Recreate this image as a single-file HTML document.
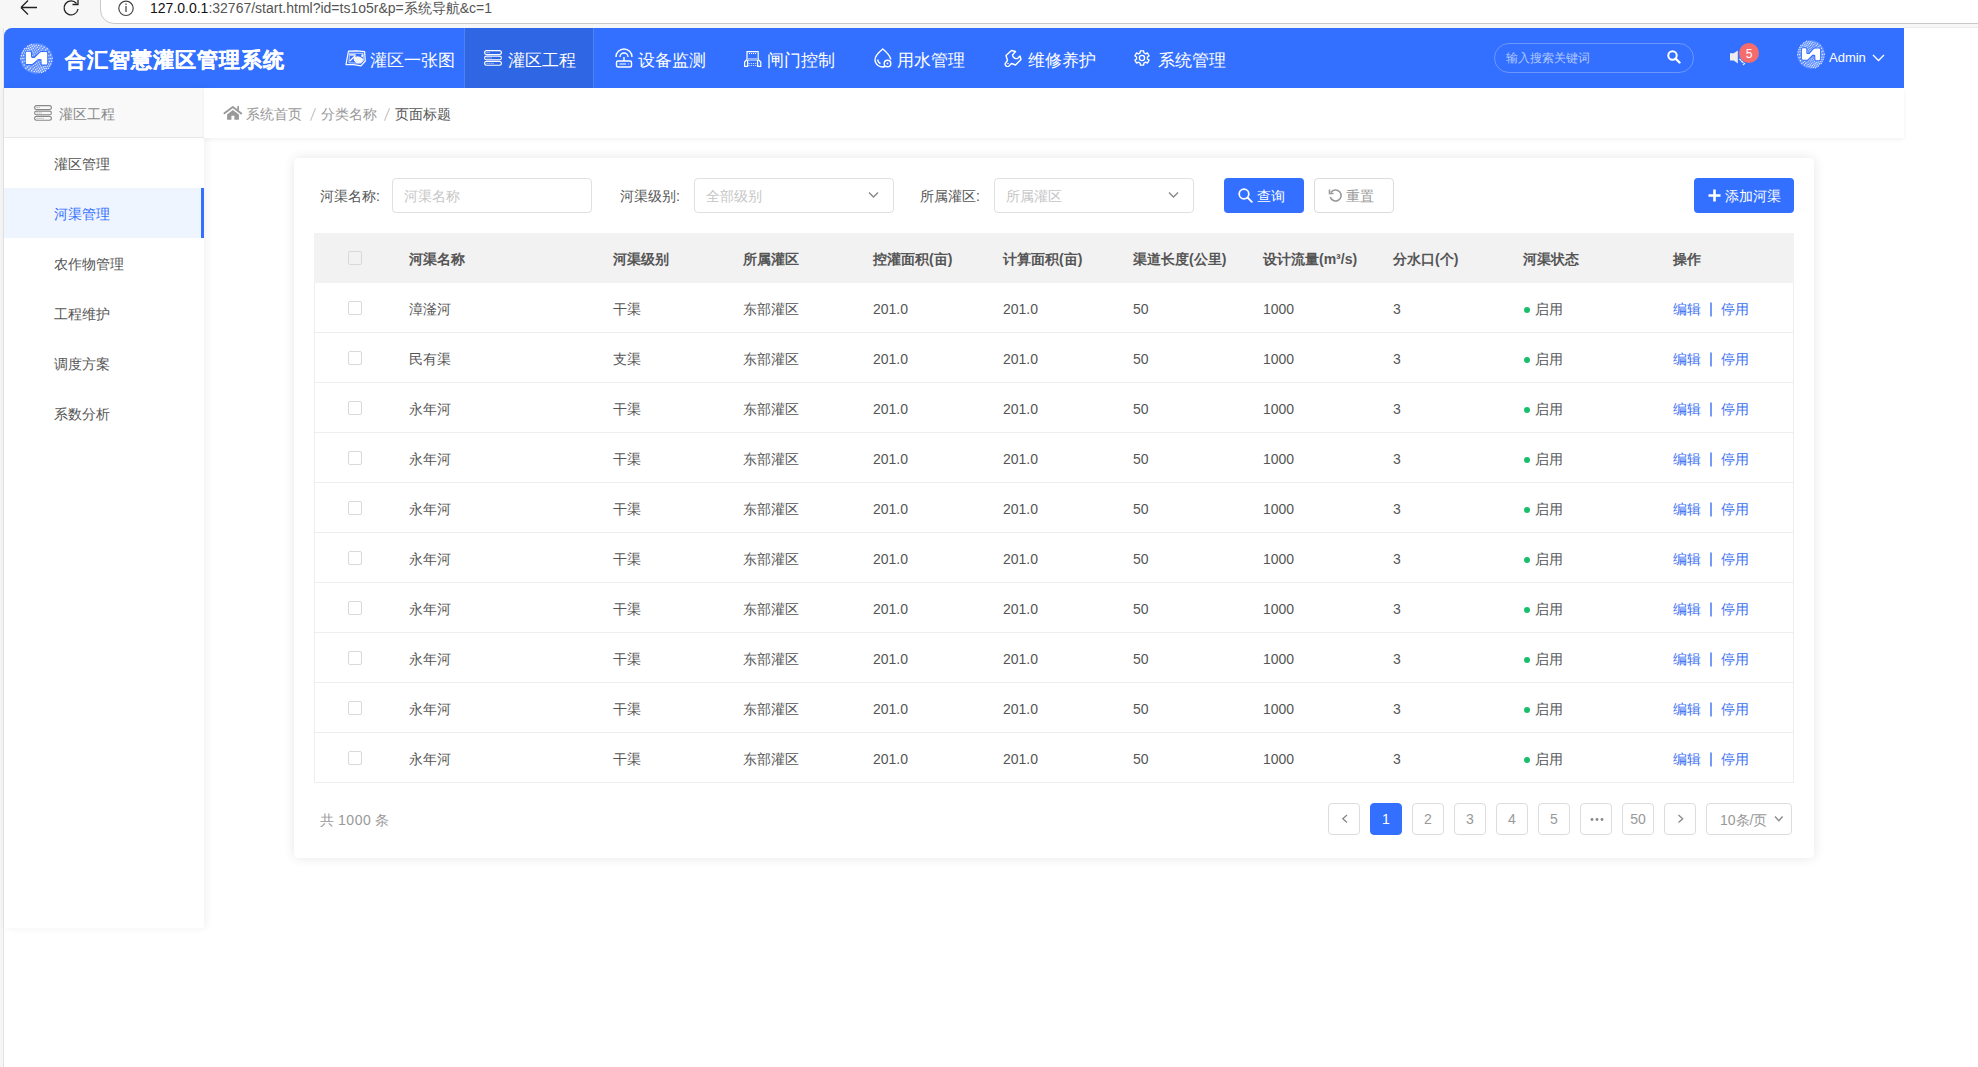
<!DOCTYPE html>
<html><head><meta charset="utf-8">
<style>
*{margin:0;padding:0;box-sizing:border-box}
html,body{width:1978px;height:1067px;overflow:hidden;background:#fff;font-family:"Liberation Sans",sans-serif;}
.a{position:absolute}
.t{position:absolute;white-space:nowrap}
#chrome{left:0;top:0;width:1978px;height:28px;background:#f7f7f7}
#addr{left:100px;top:-14px;width:1900px;height:38px;background:#fff;border:1px solid #c9c9c9;border-radius:14px}
#hdr{left:4px;top:28px;width:1900px;height:60px;background:#3370ff;border-top-left-radius:8px}
.nav{color:#fff;font-size:16.5px;line-height:20px;top:50px}
.navact{left:464px;top:28px;width:130px;height:60px;background:#2f66e3;border-left:1px solid #4f82f0;border-right:1px solid #4f82f0}
#side{left:4px;top:88px;width:200px;height:840px;background:#fff;box-shadow:2px 0 8px rgba(0,0,0,0.06)}
#sidehd{left:4px;top:88px;width:200px;height:50px;background:#f9f9f9;border-bottom:1px solid #e8e8e8}
.si{font-size:14px;line-height:20px;color:#555;left:54px}
#crumb{left:204px;top:88px;width:1700px;height:50px;background:#fff;box-shadow:0 2px 4px rgba(0,0,0,0.05)}
#card{left:294px;top:158px;width:1520px;height:700px;background:#fff;border-radius:4px;box-shadow:0 0 12px rgba(0,0,0,0.1)}
.lbl{font-size:14px;line-height:20px;color:#555;top:186px}
.inp{top:178px;height:35px;width:200px;border:1px solid #e0e0e0;border-radius:4px;background:#fff}
.ph{font-size:14px;line-height:20px;color:#c6c6c6;top:186px}
.btn{top:178px;height:35px;border-radius:4px}
.th{font-size:14px;line-height:20px;color:#555;font-weight:bold;top:249px}
.cb{width:14px;height:14px;border:1px solid #d9d9d9;border-radius:2px;background:transparent;left:348px}
.td{font-size:14px;line-height:20px;color:#555}
.lnk{color:#3a6ff5}
.pg{top:803px;width:32px;height:32px;border:1px solid #ddd;border-radius:4px;background:#fff;color:#999;font-size:14px;line-height:30px;text-align:center}
</style></head><body>
<div id="chrome" class="a"></div>
<div id="addr" class="a"></div>
<div class="a" style="left:1904px;top:27px;width:74px;height:1px;background:#ececec"></div>
<!-- browser icons -->
<svg class="a" style="left:18px;top:0px" width="22" height="16" viewBox="0 0 22 16"><path d="M3 7.5H19M3 7.5L10 0.5M3 7.5L10 14.5" stroke="#222" stroke-width="1.3" fill="none"/></svg>
<svg class="a" style="left:62px;top:0px" width="20" height="17" viewBox="0 0 20 17"><path d="M14.5 3.5A7 7 0 1 0 16 9" stroke="#222" stroke-width="1.3" fill="none"/><path d="M10.5 4.5H16V-1" stroke="#222" stroke-width="1.3" fill="none"/></svg>
<svg class="a" style="left:117px;top:0px" width="18" height="17" viewBox="0 0 18 17"><circle cx="9" cy="8.3" r="7.2" stroke="#444" stroke-width="1.2" fill="none"/><rect x="8.3" y="6" width="1.4" height="6" fill="#555"/><rect x="8.3" y="3.5" width="1.4" height="1.4" fill="#555"/></svg>
<div class="t" style="left:150px;top:0px;font-size:14px;line-height:16px;color:#555"><span style="color:#111">127.0.0.1</span>:32767/start.html?id=ts1o5r&amp;p=系统导航&amp;c=1</div>
<div class="a" style="left:0;top:28px;width:3px;height:1039px;background:#f5f5f5"></div>
<div class="a" style="left:3px;top:28px;width:1px;height:1039px;background:#e3e3e3"></div>

<!-- header -->
<div id="hdr" class="a"></div>
<div class="a navact"></div>
<svg width="0" height="0" style="position:absolute"><defs><symbol id="logo" viewBox="0 0 33 31"><ellipse cx="16.5" cy="15.5" rx="16.3" ry="15.3" fill="#fff" opacity="0.22"/><g fill="#fff" opacity="0.85"><circle cx="7.7" cy="3.3" r="0.75"/><circle cx="9.6" cy="2.5" r="0.75"/><circle cx="11.3" cy="1.4" r="0.75"/><circle cx="4.5" cy="5.8" r="0.75"/><circle cx="6.7" cy="5.6" r="0.75"/><circle cx="8.7" cy="5.2" r="0.75"/><circle cx="10.6" cy="4.4" r="0.75"/><circle cx="12.3" cy="3.3" r="0.75"/><circle cx="13.8" cy="1.9" r="0.75"/><circle cx="3.4" cy="7.9" r="0.75"/><circle cx="5.6" cy="7.9" r="0.75"/><circle cx="7.8" cy="7.6" r="0.75"/><circle cx="9.7" cy="7.0" r="0.75"/><circle cx="11.6" cy="6.2" r="0.75"/><circle cx="13.3" cy="5.2" r="0.75"/><circle cx="14.8" cy="3.8" r="0.75"/><circle cx="16.2" cy="2.2" r="0.75"/><circle cx="2.3" cy="10.1" r="0.75"/><circle cx="4.6" cy="10.1" r="0.75"/><circle cx="6.8" cy="9.9" r="0.75"/><circle cx="8.8" cy="9.5" r="0.60"/><circle cx="10.7" cy="8.9" r="0.60"/><circle cx="12.6" cy="8.1" r="0.60"/><circle cx="14.3" cy="7.0" r="0.60"/><circle cx="15.9" cy="5.8" r="0.60"/><circle cx="17.3" cy="4.3" r="0.75"/><circle cx="18.7" cy="2.6" r="0.75"/><circle cx="1.4" cy="12.7" r="0.75"/><circle cx="3.7" cy="12.6" r="0.75"/><circle cx="5.8" cy="12.4" r="0.75"/><circle cx="7.9" cy="12.0" r="0.60"/><circle cx="9.8" cy="11.5" r="0.60"/><circle cx="11.7" cy="10.8" r="0.60"/><circle cx="13.5" cy="9.9" r="0.60"/><circle cx="15.3" cy="8.9" r="0.60"/><circle cx="16.9" cy="7.7" r="0.60"/><circle cx="18.5" cy="6.4" r="0.60"/><circle cx="19.9" cy="4.9" r="0.75"/><circle cx="21.3" cy="3.3" r="0.75"/><circle cx="0.8" cy="15.8" r="0.75"/><circle cx="2.9" cy="15.5" r="0.75"/><circle cx="5.0" cy="15.2" r="0.75"/><circle cx="7.0" cy="14.7" r="0.60"/><circle cx="9.0" cy="14.1" r="0.60"/><circle cx="10.9" cy="13.5" r="0.60"/><circle cx="12.7" cy="12.7" r="0.60"/><circle cx="14.5" cy="11.8" r="0.60"/><circle cx="16.3" cy="10.8" r="0.60"/><circle cx="17.9" cy="9.7" r="0.60"/><circle cx="19.6" cy="8.5" r="0.60"/><circle cx="21.1" cy="7.2" r="0.60"/><circle cx="22.7" cy="5.8" r="0.75"/><circle cx="24.1" cy="4.3" r="0.75"/><circle cx="2.5" cy="18.9" r="0.75"/><circle cx="4.4" cy="18.3" r="0.75"/><circle cx="6.3" cy="17.7" r="0.60"/><circle cx="8.2" cy="17.0" r="0.60"/><circle cx="10.1" cy="16.2" r="0.60"/><circle cx="11.9" cy="15.4" r="0.60"/><circle cx="13.7" cy="14.6" r="0.60"/><circle cx="15.5" cy="13.6" r="0.60"/><circle cx="17.3" cy="12.7" r="0.60"/><circle cx="19.0" cy="11.7" r="0.60"/><circle cx="20.7" cy="10.6" r="0.60"/><circle cx="22.4" cy="9.5" r="0.60"/><circle cx="24.0" cy="8.3" r="0.75"/><circle cx="25.6" cy="7.1" r="0.75"/><circle cx="27.2" cy="5.8" r="0.75"/><circle cx="4.1" cy="22.1" r="0.75"/><circle cx="5.9" cy="21.1" r="0.75"/><circle cx="7.7" cy="20.2" r="0.60"/><circle cx="9.4" cy="19.3" r="0.60"/><circle cx="11.2" cy="18.3" r="0.60"/><circle cx="13.0" cy="17.4" r="0.60"/><circle cx="14.7" cy="16.4" r="0.60"/><circle cx="16.5" cy="15.5" r="0.60"/><circle cx="18.3" cy="14.6" r="0.60"/><circle cx="20.0" cy="13.6" r="0.60"/><circle cx="21.8" cy="12.7" r="0.60"/><circle cx="23.6" cy="11.7" r="0.60"/><circle cx="25.3" cy="10.8" r="0.60"/><circle cx="27.1" cy="9.9" r="0.75"/><circle cx="28.9" cy="8.9" r="0.75"/><circle cx="5.8" cy="25.2" r="0.75"/><circle cx="7.4" cy="23.9" r="0.75"/><circle cx="9.0" cy="22.7" r="0.75"/><circle cx="10.6" cy="21.5" r="0.60"/><circle cx="12.3" cy="20.4" r="0.60"/><circle cx="14.0" cy="19.3" r="0.60"/><circle cx="15.7" cy="18.3" r="0.60"/><circle cx="17.5" cy="17.4" r="0.60"/><circle cx="19.3" cy="16.4" r="0.60"/><circle cx="21.1" cy="15.6" r="0.60"/><circle cx="22.9" cy="14.8" r="0.60"/><circle cx="24.8" cy="14.0" r="0.60"/><circle cx="26.7" cy="13.3" r="0.60"/><circle cx="28.6" cy="12.7" r="0.75"/><circle cx="30.5" cy="12.1" r="0.75"/><circle cx="8.9" cy="26.7" r="0.75"/><circle cx="10.3" cy="25.2" r="0.75"/><circle cx="11.9" cy="23.8" r="0.60"/><circle cx="13.4" cy="22.5" r="0.60"/><circle cx="15.1" cy="21.3" r="0.60"/><circle cx="16.7" cy="20.2" r="0.60"/><circle cx="18.5" cy="19.2" r="0.60"/><circle cx="20.3" cy="18.3" r="0.60"/><circle cx="22.1" cy="17.5" r="0.60"/><circle cx="24.0" cy="16.9" r="0.60"/><circle cx="26.0" cy="16.3" r="0.60"/><circle cx="28.0" cy="15.8" r="0.75"/><circle cx="30.1" cy="15.5" r="0.75"/><circle cx="32.2" cy="15.2" r="0.75"/><circle cx="11.7" cy="27.7" r="0.75"/><circle cx="13.1" cy="26.1" r="0.75"/><circle cx="14.5" cy="24.6" r="0.60"/><circle cx="16.1" cy="23.3" r="0.60"/><circle cx="17.7" cy="22.1" r="0.60"/><circle cx="19.5" cy="21.1" r="0.60"/><circle cx="21.3" cy="20.2" r="0.60"/><circle cx="23.2" cy="19.5" r="0.60"/><circle cx="25.1" cy="19.0" r="0.60"/><circle cx="27.2" cy="18.6" r="0.75"/><circle cx="29.3" cy="18.4" r="0.75"/><circle cx="31.6" cy="18.3" r="0.75"/><circle cx="14.3" cy="28.4" r="0.75"/><circle cx="15.7" cy="26.7" r="0.75"/><circle cx="17.1" cy="25.2" r="0.60"/><circle cx="18.7" cy="24.0" r="0.60"/><circle cx="20.4" cy="22.9" r="0.60"/><circle cx="22.3" cy="22.1" r="0.60"/><circle cx="24.2" cy="21.5" r="0.60"/><circle cx="26.2" cy="21.1" r="0.75"/><circle cx="28.4" cy="20.9" r="0.75"/><circle cx="30.7" cy="20.9" r="0.75"/><circle cx="16.8" cy="28.8" r="0.75"/><circle cx="18.2" cy="27.2" r="0.75"/><circle cx="19.7" cy="25.8" r="0.75"/><circle cx="21.4" cy="24.8" r="0.75"/><circle cx="23.3" cy="24.0" r="0.75"/><circle cx="25.2" cy="23.4" r="0.75"/><circle cx="27.4" cy="23.1" r="0.75"/><circle cx="29.6" cy="23.1" r="0.75"/><circle cx="19.2" cy="29.1" r="0.75"/><circle cx="20.7" cy="27.7" r="0.75"/><circle cx="22.4" cy="26.6" r="0.75"/><circle cx="24.3" cy="25.8" r="0.75"/><circle cx="26.3" cy="25.4" r="0.75"/><circle cx="28.5" cy="25.2" r="0.75"/><circle cx="21.7" cy="29.6" r="0.75"/><circle cx="23.4" cy="28.5" r="0.75"/><circle cx="25.3" cy="27.7" r="0.75"/></g><path d="M5.8 10Q5.8 8.8 7 8.8H9.8Q11 8.8 11 10V13.6Q11 14.9 12.3 14.9H14.6L19.6 10Q20.6 9 21.9 9H26Q27.2 9 27.2 10.2V20.4Q27.2 21.6 26 21.6H22.8Q21.6 21.6 21.6 20.4V17.2Q21.6 15.9 20.3 15.9H18.1L13.1 20.2Q12.1 21.1 10.8 21.1H7Q5.8 21.1 5.8 19.9Z" fill="#3370ff" stroke="#3370ff" stroke-width="2.2"/><path d="M5.8 10Q5.8 8.8 7 8.8H9.8Q11 8.8 11 10V13.6Q11 14.9 12.3 14.9H14.6L19.6 10Q20.6 9 21.9 9H26Q27.2 9 27.2 10.2V20.4Q27.2 21.6 26 21.6H22.8Q21.6 21.6 21.6 20.4V17.2Q21.6 15.9 20.3 15.9H18.1L13.1 20.2Q12.1 21.1 10.8 21.1H7Q5.8 21.1 5.8 19.9Z" fill="#fff"/></symbol></defs></svg>
<svg class="a" style="left:20px;top:43px" width="33" height="31"><use href="#logo"/></svg>
<div class="t" style="left:65px;top:47px;font-size:21px;letter-spacing:1px;line-height:26px;color:#fff;font-weight:bold;-webkit-text-stroke:0.3px #fff">合汇智慧灌区管理系统</div>

<!-- nav icons -->
<svg class="a" style="left:345px;top:50px" width="22" height="17" viewBox="0 0 22 17"><path d="M3.5 1.2L12 0.8L19.6 1.6L20.3 11L16 15.8L8.5 14.6L1 14.6L2.2 8Z" stroke="#fff" stroke-width="1.2" fill="none" stroke-linejoin="round"/><path d="M4.5 3.2L18 3.4L18.4 10.8L15.5 13.2L4 12.8Z" stroke="#fff" stroke-width="0.9" fill="none" opacity="0.75"/><path d="M5 4.2H10.5V5.6H5Z" fill="#fff"/><path d="M10.5 5.5L4.8 11" stroke="#fff" stroke-width="1.2"/><path d="M8.5 7.2L12.5 6.2L15.5 7L18.5 9.2L16.5 13L11.5 13.2L9 10.5Z" fill="#f4f4f4"/><path d="M16.5 4.5L18.2 4.2L18.2 7L16 6.5Z" fill="#fff"/></svg>
<svg class="a" style="left:484px;top:50px" width="18" height="16" viewBox="0 0 18 16"><rect x="0.6" y="0.6" width="16.8" height="3.9" rx="1.95" stroke="#fff" stroke-width="1.1" fill="none"/><rect x="0.6" y="6.1" width="16.8" height="3.7" rx="1.85" stroke="#fff" stroke-width="1.1" fill="none"/><rect x="0.6" y="11.4" width="16.8" height="3.9" rx="1.95" stroke="#fff" stroke-width="1.1" fill="none"/><path d="M2.6 2.55H3.6M4.6 2.55H5.6M2.6 7.95H3.6M4.6 7.95H5.6M6.6 7.95H7.6M2.6 13.35H3.6M4.6 13.35H5.6M6.6 13.35H7.6M8.6 13.35H9.6" stroke="#fff" stroke-width="1" opacity="0.8"/></svg>
<div class="t nav" style="left:370px">灌区一张图</div>
<div class="t nav" style="left:508px">灌区工程</div>
<svg class="a" style="left:615px;top:48px" width="18" height="20" viewBox="0 0 18 20"><path d="M1 9A8 8 0 0 1 17 9" stroke="#fff" stroke-width="1.4" fill="none"/><path d="M5 9A4 4 0 0 1 13 9" stroke="#fff" stroke-width="1.4" fill="none"/><path d="M9 9V13" stroke="#fff" stroke-width="1.4"/><rect x="1.5" y="13" width="15" height="6" rx="1.5" stroke="#fff" stroke-width="1.4" fill="none"/><path d="M4.5 16H11M13 16H13.8" stroke="#fff" stroke-width="1.2"/></svg>
<div class="t nav" style="left:638px">设备监测</div>
<svg class="a" style="left:744px;top:50px" width="18" height="17" viewBox="0 0 18 17"><path d="M3 9.5V1.6H14.2V9.5" stroke="#fff" stroke-width="1.2" fill="none" stroke-linejoin="round"/><path d="M3 9.5L0.6 12V16.4H3.6V10M14.2 9.5L16.8 12V16.4H13.6V10" stroke="#fff" stroke-width="1.2" fill="none" stroke-linejoin="round"/><rect x="3.6" y="8" width="10" height="3" fill="#fff" opacity="0.45"/><path d="M4.5 13.5H13M4.5 15.5H13" stroke="#fff" stroke-width="0.9" stroke-dasharray="1.2 1" opacity="0.85"/><path d="M5 3.5H13" stroke="#fff" stroke-width="1.1" stroke-dasharray="1 1"/></svg>
<div class="t nav" style="left:767px">闸门控制</div>
<svg class="a" style="left:874px;top:48px" width="18" height="20" viewBox="0 0 18 20"><path d="M11 18.5A7.5 7.5 0 0 1 1 12C1 8 5 4 8.8 1C12.5 4 16 7.5 16.8 11.5" stroke="#fff" stroke-width="1.4" fill="none"/><path d="M3.5 11.5Q4.5 15 6.5 15.5" stroke="#fff" stroke-width="1.3" fill="none"/><circle cx="13.5" cy="15.5" r="3.3" stroke="#fff" stroke-width="1.4" fill="none"/><circle cx="13.5" cy="15.5" r="0.9" fill="#fff"/></svg>
<div class="t nav" style="left:897px">用水管理</div>
<svg class="a" style="left:1004px;top:49px" width="18" height="18" viewBox="0 0 18 18"><path d="M2 6.5L7.5 1.5L11.5 2.5L8.5 6A4 4 0 0 0 13.5 9.5L16 7L17 10.5L11.5 16L7.5 14.5L4.5 17.5C2 18 0 15.5 2 13.5L3.5 11.5Z" stroke="#fff" stroke-width="1.4" fill="none" stroke-linejoin="round"/><ellipse cx="4" cy="14.6" rx="1" ry="0.7" fill="#fff"/></svg>
<div class="t nav" style="left:1028px">维修养护</div>
<svg class="a" style="left:1133px;top:49px" width="18" height="18" viewBox="-1 -1 18 18"><path d="M5.94 2.90 L6.21 2.80 L6.34 0.79 L9.66 0.79 L9.79 2.80 L11.39 3.67 L11.61 3.85 L13.41 2.95 L15.08 5.84 L13.40 6.95 L13.45 8.77 L13.40 9.05 L15.08 10.16 L13.41 13.05 L11.61 12.15 L10.06 13.10 L9.79 13.20 L9.66 15.21 L6.34 15.21 L6.21 13.20 L4.61 12.33 L4.39 12.15 L2.59 13.05 L0.92 10.16 L2.60 9.05 L2.55 7.23 L2.60 6.95 L0.92 5.84 L2.59 2.95 L4.39 3.85Z" stroke="#fff" stroke-width="1.3" fill="none" stroke-linejoin="round"/><circle cx="8" cy="8" r="2.6" stroke="#fff" stroke-width="1.3" fill="none"/></svg>
<div class="t nav" style="left:1158px">系统管理</div>

<!-- search -->
<div class="a" style="left:1494px;top:43px;width:200px;height:30px;border:1px solid rgba(255,255,255,0.27);border-radius:15px"></div>
<div class="t" style="left:1506px;top:50px;font-size:12px;line-height:16px;color:rgba(255,255,255,0.62)">输入搜索关键词</div>
<svg class="a" style="left:1667px;top:50px" width="14" height="14" viewBox="0 0 14 14"><circle cx="5.5" cy="5.5" r="4.2" stroke="#fff" stroke-width="2" fill="none"/><path d="M8.5 8.5L12.5 12.5" stroke="#fff" stroke-width="2.4" stroke-linecap="round"/></svg>
<!-- bell -->
<svg class="a" style="left:1730px;top:50px" width="18" height="18" viewBox="0 0 18 18"><path d="M0 3.2H3.8L7.8 0.4V13.4L3.8 10.5H0Z" fill="#eee"/><path d="M9.8 9.2L10.8 10.2M11.6 11.4L13 12.4M13.4 14.5L14.6 13.4" stroke="#eee" stroke-width="1.3" stroke-linecap="round"/></svg>
<div class="a" style="left:1739px;top:43px;width:20px;height:20px;border-radius:10px;background:#f56c6c;color:#fff;font-size:12px;line-height:22px;text-align:center">5</div>
<!-- avatar -->
<svg class="a" style="left:1797px;top:40px" width="28" height="29" viewBox="0 0 33 31" preserveAspectRatio="none"><use href="#logo"/></svg>
<div class="t" style="left:1829px;top:49px;font-size:13px;line-height:18px;color:#fff">Admin</div>
<svg class="a" style="left:1872px;top:54px" width="13" height="8" viewBox="0 0 13 8"><path d="M1 1L6.5 6.5L12 1" stroke="#fff" stroke-width="1.3" fill="none"/></svg>

<!-- sidebar -->
<div id="side" class="a"></div>
<div id="sidehd" class="a"></div>
<svg class="a" style="left:34px;top:105px" width="18" height="16" viewBox="0 0 18 16"><rect x="0.6" y="0.6" width="16.8" height="3.9" rx="1.95" stroke="#888" stroke-width="1.1" fill="none"/><rect x="0.6" y="6.1" width="16.8" height="3.7" rx="1.85" stroke="#888" stroke-width="1.1" fill="none"/><rect x="0.6" y="11.4" width="16.8" height="3.9" rx="1.95" stroke="#888" stroke-width="1.1" fill="none"/><path d="M2.6 2.55H3.6M4.6 2.55H5.6M2.6 7.95H3.6M4.6 7.95H5.6M6.6 7.95H7.6M2.6 13.35H3.6M4.6 13.35H5.6M6.6 13.35H7.6M8.6 13.35H9.6" stroke="#888" stroke-width="1" opacity="0.8"/></svg>
<div class="t" style="left:59px;top:104px;font-size:14px;line-height:20px;color:#888">灌区工程</div>
<div class="a" style="left:4px;top:188px;width:200px;height:50px;background:#eff5ff;border-right:3px solid #3370ff"></div>
<div class="t si" style="top:154px">灌区管理</div>
<div class="t si" style="top:204px;color:#3370ff">河渠管理</div>
<div class="t si" style="top:254px">农作物管理</div>
<div class="t si" style="top:304px">工程维护</div>
<div class="t si" style="top:354px">调度方案</div>
<div class="t si" style="top:404px">系数分析</div>

<!-- breadcrumb -->
<div id="crumb" class="a"></div>
<svg class="a" style="left:222px;top:104px" width="22" height="18" viewBox="0 0 22 18"><path d="M2.4 9.2L10.8 2.9L19.3 9.4" stroke="#999" stroke-width="1.9" fill="none" stroke-linecap="round" stroke-linejoin="round"/><rect x="15.3" y="2.1" width="1.7" height="4.5" fill="#999"/><path d="M5.1 10.4L10.8 6.1L16.9 10.4V15.8H12.4V11.8H9.4V15.8H5.1Z" fill="#999"/></svg>
<div class="t" style="left:246px;top:104px;font-size:14px;line-height:20px;color:#999">系统首页</div>
<svg class="a" style="left:309px;top:107px" width="8" height="15" viewBox="0 0 8 15"><path d="M6.5 1.2L1.5 13.8" stroke="#c4c4c4" stroke-width="1.1"/></svg>
<div class="t" style="left:321px;top:104px;font-size:14px;line-height:20px;color:#999">分类名称</div>
<svg class="a" style="left:383px;top:107px" width="8" height="15" viewBox="0 0 8 15"><path d="M6.5 1.2L1.5 13.8" stroke="#c4c4c4" stroke-width="1.1"/></svg>
<div class="t" style="left:395px;top:104px;font-size:14px;line-height:20px;color:#555">页面标题</div>

<!-- card -->
<div id="card" class="a"></div>
<div class="t lbl" style="left:320px">河渠名称:</div>
<div class="a inp" style="left:392px"></div>
<div class="t ph" style="left:404px">河渠名称</div>
<div class="t lbl" style="left:620px">河渠级别:</div>
<div class="a inp" style="left:694px"></div>
<div class="t ph" style="left:706px">全部级别</div>
<svg class="a" style="left:868px;top:191px" width="11" height="8" viewBox="0 0 11 8"><path d="M1 1.5L5.5 6L10 1.5" stroke="#888" stroke-width="1.4" fill="none"/></svg>
<div class="t lbl" style="left:920px">所属灌区:</div>
<div class="a inp" style="left:994px"></div>
<div class="t ph" style="left:1006px">所属灌区</div>
<svg class="a" style="left:1168px;top:191px" width="11" height="8" viewBox="0 0 11 8"><path d="M1 1.5L5.5 6L10 1.5" stroke="#888" stroke-width="1.4" fill="none"/></svg>

<div class="a btn" style="left:1224px;width:80px;background:#3370ff"></div>
<svg class="a" style="left:1238px;top:188px" width="15" height="15" viewBox="0 0 15 15"><circle cx="6" cy="6" r="4.8" stroke="#fff" stroke-width="1.7" fill="none"/><path d="M9.5 9.5L13.8 13.8" stroke="#fff" stroke-width="1.8" stroke-linecap="round"/></svg>
<div class="t" style="left:1257px;top:186px;font-size:14px;line-height:20px;color:#fff">查询</div>
<div class="a btn" style="left:1314px;width:80px;border:1px solid #dcdcdc;background:#fff"></div>
<svg class="a" style="left:1328px;top:188px" width="15" height="15" viewBox="0 0 15 15"><path d="M3 4.5A5.5 5.5 0 1 1 2.3 9" stroke="#999" stroke-width="1.6" fill="none"/><path d="M1.5 1.5V5.5H5.5" stroke="#999" stroke-width="1.6" fill="none"/></svg>
<div class="t" style="left:1346px;top:186px;font-size:14px;line-height:20px;color:#999">重置</div>
<div class="a btn" style="left:1694px;width:100px;background:#3370ff"></div>
<svg class="a" style="left:1708px;top:189px" width="13" height="13" viewBox="0 0 13 13"><path d="M6.5 0.5V12.5M0.5 6.5H12.5" stroke="#fff" stroke-width="2.6"/></svg>
<div class="t" style="left:1725px;top:186px;font-size:14px;line-height:20px;color:#fff">添加河渠</div>

<!-- table -->
<div class="a" style="left:314px;top:233px;width:1480px;height:550px;border:1px solid #eee;border-top:none;background:#fff"></div>
<div class="a" style="left:314px;top:233px;width:1480px;height:50px;background:#f2f2f2"></div>
<div class="a cb" style="top:251px"></div>
<div class="t th" style="left:409px">河渠名称</div>
<div class="t th" style="left:613px">河渠级别</div>
<div class="t th" style="left:743px">所属灌区</div>
<div class="t th" style="left:873px">控灌面积(亩)</div>
<div class="t th" style="left:1003px">计算面积(亩)</div>
<div class="t th" style="left:1133px">渠道长度(公里)</div>
<div class="t th" style="left:1263px">设计流量(m³/s)</div>
<div class="t th" style="left:1393px">分水口(个)</div>
<div class="t th" style="left:1523px">河渠状态</div>
<div class="t th" style="left:1673px">操作</div>
<div class="a" style="left:315px;top:332px;width:1478px;height:1px;background:#eee"></div>
<div class="a cb" style="top:301px"></div>
<div class="t td" style="left:409px;top:299px">漳滏河</div>
<div class="t td" style="left:613px;top:299px">干渠</div>
<div class="t td" style="left:743px;top:299px">东部灌区</div>
<div class="t td" style="left:873px;top:298.5px">201.0</div>
<div class="t td" style="left:1003px;top:298.5px">201.0</div>
<div class="t td" style="left:1133px;top:298.5px">50</div>
<div class="t td" style="left:1263px;top:298.5px">1000</div>
<div class="t td" style="left:1393px;top:298.5px">3</div>
<div class="a" style="left:1524px;top:307px;width:6px;height:6px;border-radius:3px;background:#19be6b"></div>
<div class="t td" style="left:1535px;top:299px">启用</div>
<div class="t td lnk" style="left:1673px;top:299px">编辑</div>
<svg class="a" style="left:1709px;top:302px" width="4" height="15"><path d="M2 0.5V14.5" stroke="#3a6ff5" stroke-width="1.4"/></svg>
<div class="t td lnk" style="left:1721px;top:299px">停用</div>
<div class="a" style="left:315px;top:382px;width:1478px;height:1px;background:#eee"></div>
<div class="a cb" style="top:351px"></div>
<div class="t td" style="left:409px;top:349px">民有渠</div>
<div class="t td" style="left:613px;top:349px">支渠</div>
<div class="t td" style="left:743px;top:349px">东部灌区</div>
<div class="t td" style="left:873px;top:348.5px">201.0</div>
<div class="t td" style="left:1003px;top:348.5px">201.0</div>
<div class="t td" style="left:1133px;top:348.5px">50</div>
<div class="t td" style="left:1263px;top:348.5px">1000</div>
<div class="t td" style="left:1393px;top:348.5px">3</div>
<div class="a" style="left:1524px;top:357px;width:6px;height:6px;border-radius:3px;background:#19be6b"></div>
<div class="t td" style="left:1535px;top:349px">启用</div>
<div class="t td lnk" style="left:1673px;top:349px">编辑</div>
<svg class="a" style="left:1709px;top:352px" width="4" height="15"><path d="M2 0.5V14.5" stroke="#3a6ff5" stroke-width="1.4"/></svg>
<div class="t td lnk" style="left:1721px;top:349px">停用</div>
<div class="a" style="left:315px;top:432px;width:1478px;height:1px;background:#eee"></div>
<div class="a cb" style="top:401px"></div>
<div class="t td" style="left:409px;top:399px">永年河</div>
<div class="t td" style="left:613px;top:399px">干渠</div>
<div class="t td" style="left:743px;top:399px">东部灌区</div>
<div class="t td" style="left:873px;top:398.5px">201.0</div>
<div class="t td" style="left:1003px;top:398.5px">201.0</div>
<div class="t td" style="left:1133px;top:398.5px">50</div>
<div class="t td" style="left:1263px;top:398.5px">1000</div>
<div class="t td" style="left:1393px;top:398.5px">3</div>
<div class="a" style="left:1524px;top:407px;width:6px;height:6px;border-radius:3px;background:#19be6b"></div>
<div class="t td" style="left:1535px;top:399px">启用</div>
<div class="t td lnk" style="left:1673px;top:399px">编辑</div>
<svg class="a" style="left:1709px;top:402px" width="4" height="15"><path d="M2 0.5V14.5" stroke="#3a6ff5" stroke-width="1.4"/></svg>
<div class="t td lnk" style="left:1721px;top:399px">停用</div>
<div class="a" style="left:315px;top:482px;width:1478px;height:1px;background:#eee"></div>
<div class="a cb" style="top:451px"></div>
<div class="t td" style="left:409px;top:449px">永年河</div>
<div class="t td" style="left:613px;top:449px">干渠</div>
<div class="t td" style="left:743px;top:449px">东部灌区</div>
<div class="t td" style="left:873px;top:448.5px">201.0</div>
<div class="t td" style="left:1003px;top:448.5px">201.0</div>
<div class="t td" style="left:1133px;top:448.5px">50</div>
<div class="t td" style="left:1263px;top:448.5px">1000</div>
<div class="t td" style="left:1393px;top:448.5px">3</div>
<div class="a" style="left:1524px;top:457px;width:6px;height:6px;border-radius:3px;background:#19be6b"></div>
<div class="t td" style="left:1535px;top:449px">启用</div>
<div class="t td lnk" style="left:1673px;top:449px">编辑</div>
<svg class="a" style="left:1709px;top:452px" width="4" height="15"><path d="M2 0.5V14.5" stroke="#3a6ff5" stroke-width="1.4"/></svg>
<div class="t td lnk" style="left:1721px;top:449px">停用</div>
<div class="a" style="left:315px;top:532px;width:1478px;height:1px;background:#eee"></div>
<div class="a cb" style="top:501px"></div>
<div class="t td" style="left:409px;top:499px">永年河</div>
<div class="t td" style="left:613px;top:499px">干渠</div>
<div class="t td" style="left:743px;top:499px">东部灌区</div>
<div class="t td" style="left:873px;top:498.5px">201.0</div>
<div class="t td" style="left:1003px;top:498.5px">201.0</div>
<div class="t td" style="left:1133px;top:498.5px">50</div>
<div class="t td" style="left:1263px;top:498.5px">1000</div>
<div class="t td" style="left:1393px;top:498.5px">3</div>
<div class="a" style="left:1524px;top:507px;width:6px;height:6px;border-radius:3px;background:#19be6b"></div>
<div class="t td" style="left:1535px;top:499px">启用</div>
<div class="t td lnk" style="left:1673px;top:499px">编辑</div>
<svg class="a" style="left:1709px;top:502px" width="4" height="15"><path d="M2 0.5V14.5" stroke="#3a6ff5" stroke-width="1.4"/></svg>
<div class="t td lnk" style="left:1721px;top:499px">停用</div>
<div class="a" style="left:315px;top:582px;width:1478px;height:1px;background:#eee"></div>
<div class="a cb" style="top:551px"></div>
<div class="t td" style="left:409px;top:549px">永年河</div>
<div class="t td" style="left:613px;top:549px">干渠</div>
<div class="t td" style="left:743px;top:549px">东部灌区</div>
<div class="t td" style="left:873px;top:548.5px">201.0</div>
<div class="t td" style="left:1003px;top:548.5px">201.0</div>
<div class="t td" style="left:1133px;top:548.5px">50</div>
<div class="t td" style="left:1263px;top:548.5px">1000</div>
<div class="t td" style="left:1393px;top:548.5px">3</div>
<div class="a" style="left:1524px;top:557px;width:6px;height:6px;border-radius:3px;background:#19be6b"></div>
<div class="t td" style="left:1535px;top:549px">启用</div>
<div class="t td lnk" style="left:1673px;top:549px">编辑</div>
<svg class="a" style="left:1709px;top:552px" width="4" height="15"><path d="M2 0.5V14.5" stroke="#3a6ff5" stroke-width="1.4"/></svg>
<div class="t td lnk" style="left:1721px;top:549px">停用</div>
<div class="a" style="left:315px;top:632px;width:1478px;height:1px;background:#eee"></div>
<div class="a cb" style="top:601px"></div>
<div class="t td" style="left:409px;top:599px">永年河</div>
<div class="t td" style="left:613px;top:599px">干渠</div>
<div class="t td" style="left:743px;top:599px">东部灌区</div>
<div class="t td" style="left:873px;top:598.5px">201.0</div>
<div class="t td" style="left:1003px;top:598.5px">201.0</div>
<div class="t td" style="left:1133px;top:598.5px">50</div>
<div class="t td" style="left:1263px;top:598.5px">1000</div>
<div class="t td" style="left:1393px;top:598.5px">3</div>
<div class="a" style="left:1524px;top:607px;width:6px;height:6px;border-radius:3px;background:#19be6b"></div>
<div class="t td" style="left:1535px;top:599px">启用</div>
<div class="t td lnk" style="left:1673px;top:599px">编辑</div>
<svg class="a" style="left:1709px;top:602px" width="4" height="15"><path d="M2 0.5V14.5" stroke="#3a6ff5" stroke-width="1.4"/></svg>
<div class="t td lnk" style="left:1721px;top:599px">停用</div>
<div class="a" style="left:315px;top:682px;width:1478px;height:1px;background:#eee"></div>
<div class="a cb" style="top:651px"></div>
<div class="t td" style="left:409px;top:649px">永年河</div>
<div class="t td" style="left:613px;top:649px">干渠</div>
<div class="t td" style="left:743px;top:649px">东部灌区</div>
<div class="t td" style="left:873px;top:648.5px">201.0</div>
<div class="t td" style="left:1003px;top:648.5px">201.0</div>
<div class="t td" style="left:1133px;top:648.5px">50</div>
<div class="t td" style="left:1263px;top:648.5px">1000</div>
<div class="t td" style="left:1393px;top:648.5px">3</div>
<div class="a" style="left:1524px;top:657px;width:6px;height:6px;border-radius:3px;background:#19be6b"></div>
<div class="t td" style="left:1535px;top:649px">启用</div>
<div class="t td lnk" style="left:1673px;top:649px">编辑</div>
<svg class="a" style="left:1709px;top:652px" width="4" height="15"><path d="M2 0.5V14.5" stroke="#3a6ff5" stroke-width="1.4"/></svg>
<div class="t td lnk" style="left:1721px;top:649px">停用</div>
<div class="a" style="left:315px;top:732px;width:1478px;height:1px;background:#eee"></div>
<div class="a cb" style="top:701px"></div>
<div class="t td" style="left:409px;top:699px">永年河</div>
<div class="t td" style="left:613px;top:699px">干渠</div>
<div class="t td" style="left:743px;top:699px">东部灌区</div>
<div class="t td" style="left:873px;top:698.5px">201.0</div>
<div class="t td" style="left:1003px;top:698.5px">201.0</div>
<div class="t td" style="left:1133px;top:698.5px">50</div>
<div class="t td" style="left:1263px;top:698.5px">1000</div>
<div class="t td" style="left:1393px;top:698.5px">3</div>
<div class="a" style="left:1524px;top:707px;width:6px;height:6px;border-radius:3px;background:#19be6b"></div>
<div class="t td" style="left:1535px;top:699px">启用</div>
<div class="t td lnk" style="left:1673px;top:699px">编辑</div>
<svg class="a" style="left:1709px;top:702px" width="4" height="15"><path d="M2 0.5V14.5" stroke="#3a6ff5" stroke-width="1.4"/></svg>
<div class="t td lnk" style="left:1721px;top:699px">停用</div>
<div class="a" style="left:315px;top:782px;width:1478px;height:1px;background:#eee"></div>
<div class="a cb" style="top:751px"></div>
<div class="t td" style="left:409px;top:749px">永年河</div>
<div class="t td" style="left:613px;top:749px">干渠</div>
<div class="t td" style="left:743px;top:749px">东部灌区</div>
<div class="t td" style="left:873px;top:748.5px">201.0</div>
<div class="t td" style="left:1003px;top:748.5px">201.0</div>
<div class="t td" style="left:1133px;top:748.5px">50</div>
<div class="t td" style="left:1263px;top:748.5px">1000</div>
<div class="t td" style="left:1393px;top:748.5px">3</div>
<div class="a" style="left:1524px;top:757px;width:6px;height:6px;border-radius:3px;background:#19be6b"></div>
<div class="t td" style="left:1535px;top:749px">启用</div>
<div class="t td lnk" style="left:1673px;top:749px">编辑</div>
<svg class="a" style="left:1709px;top:752px" width="4" height="15"><path d="M2 0.5V14.5" stroke="#3a6ff5" stroke-width="1.4"/></svg>
<div class="t td lnk" style="left:1721px;top:749px">停用</div>

<!-- footer -->
<div class="t" style="left:320px;top:810px;font-size:14px;line-height:20px;color:#999">共 <span style="letter-spacing:0.6px">1000</span> 条</div>
<div class="a pg" style="left:1328px"><svg style="position:absolute;left:12px;top:10px" width="8" height="10" viewBox="0 0 8 10"><path d="M6 1L1.8 4.8L6 8.6" stroke="#888" stroke-width="1.3" fill="none"/></svg></div>
<div class="a pg" style="left:1370px;background:#3370ff;border-color:#3370ff;color:#fff">1</div>
<div class="a pg" style="left:1412px">2</div>
<div class="a pg" style="left:1454px">3</div>
<div class="a pg" style="left:1496px">4</div>
<div class="a pg" style="left:1538px">5</div>
<div class="a pg" style="left:1580px"><svg style="position:absolute;left:8px;top:13px" width="16" height="5" viewBox="0 0 16 5"><circle cx="3" cy="2.5" r="1.4" fill="#888"/><circle cx="8" cy="2.5" r="1.4" fill="#888"/><circle cx="13" cy="2.5" r="1.4" fill="#888"/></svg></div>
<div class="a pg" style="left:1622px">50</div>
<div class="a pg" style="left:1664px"><svg style="position:absolute;left:12px;top:10px" width="8" height="10" viewBox="0 0 8 10"><path d="M1.5 1L5.7 4.8L1.5 8.6" stroke="#888" stroke-width="1.3" fill="none"/></svg></div>
<div class="a pg" style="left:1706px;width:86px;text-align:left;padding-left:13px;line-height:32px">10条/页<svg style="position:absolute;left:67px;top:11px" width="10" height="8" viewBox="0 0 10 8"><path d="M1 1.5L4.8 5.8L8.6 1.5" stroke="#888" stroke-width="1.3" fill="none"/></svg></div>
</body></html>
